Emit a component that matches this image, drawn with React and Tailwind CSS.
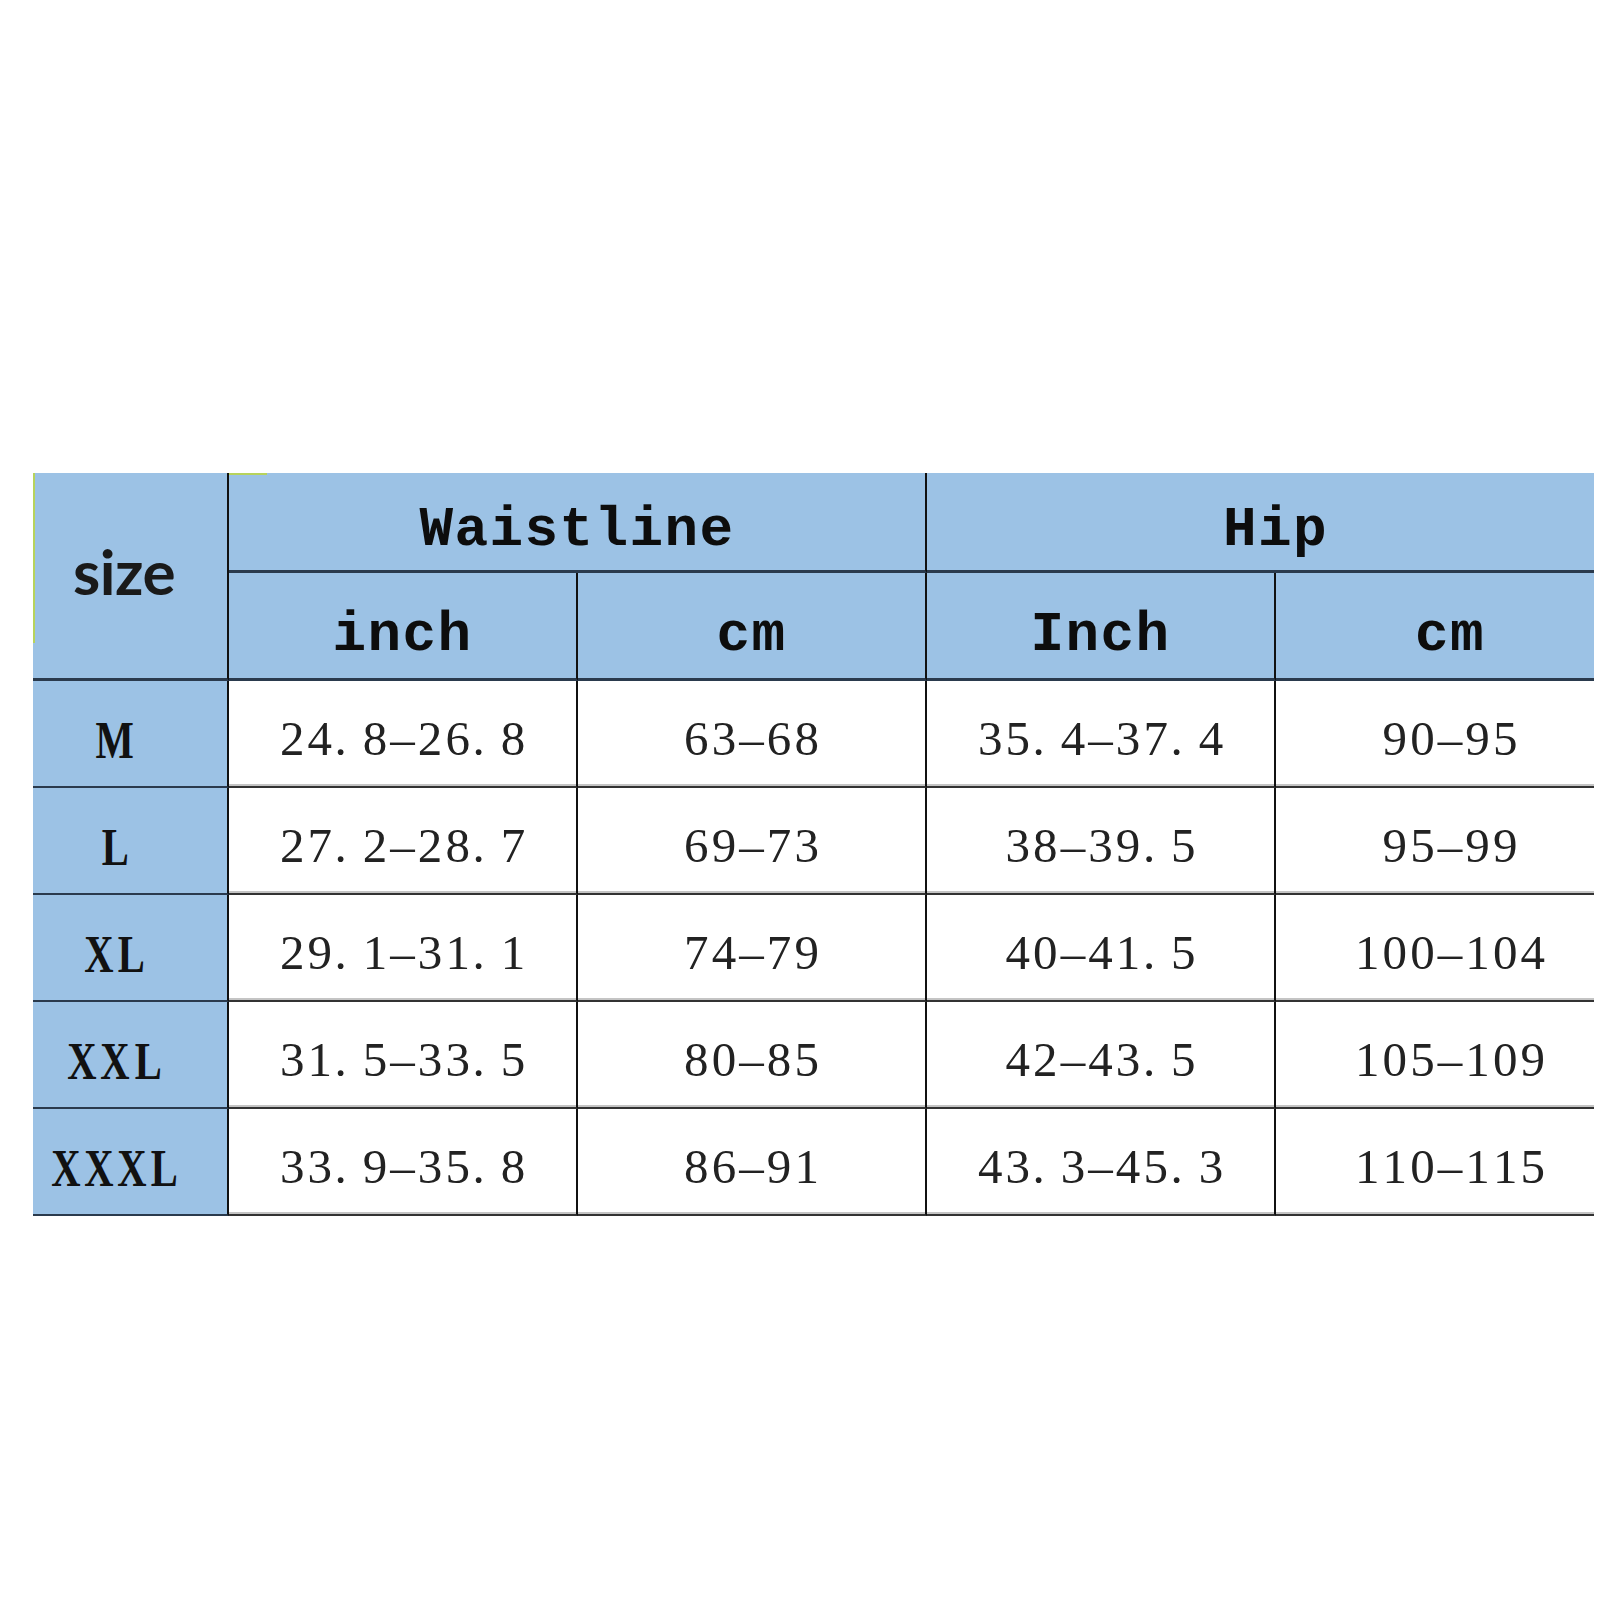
import React from "react";

const rows = [
  ["M", "24.8–26.8", "63–68", "35.4–37.4", "90–95"],
  ["L", "27.2–28.7", "69–73", "38–39.5", "95–99"],
  ["XL", "29.1–31.1", "74–79", "40–41.5", "100–104"],
  ["XXL", "31.5–33.5", "80–85", "42–43.5", "105–109"],
  ["XXXL", "33.9–35.8", "86–91", "43.3–45.3", "110–115"],
];

function Digits({ text }) {
  return (
    <span className="inline-flex font-['Liberation_Serif',serif] text-[49px] leading-none text-[#222]">
      {text.split("").map((c, i) => (
        <span
          key={i}
          className={c === "." ? "inline-block w-[27.6px] text-left pl-[1px]" : "inline-block w-[27.6px] text-center"}
        >
          {c}
        </span>
      ))}
    </span>
  );
}

function SizeLabel({ text }) {
  return (
    <span className="inline-flex font-['Liberation_Serif',serif] font-bold text-[52px] leading-none text-[#111]">
      {text.split("").map((c, i) => (
        <span key={i} className="inline-flex w-[33px] justify-center">
          <span className="inline-block scale-x-[0.78]">{c}</span>
        </span>
      ))}
    </span>
  );
}

function Head({ text }) {
  return (
    <span className="font-['Liberation_Mono',monospace] font-bold text-[56px] leading-none tracking-[1.4px] text-[#0d0d0d]">
      {text}
    </span>
  );
}

const blue = "bg-[#9cc2e5]";

export default function App() {
  return (
    <div className="w-[1623px] h-[1623px] bg-white pt-[473px] pl-[33px]">
      <div className="grid grid-cols-[196px_349px_349px_349px_318px] grid-rows-[100px_108px_107px_107px_107px_107px_107px]">
        {/* size header */}
        <div className={`${blue} relative row-span-2 border-r-2 border-b-[3px] border-r-[#111] border-b-[#2a3a4d] flex items-center justify-center pr-[12px] pb-[9px]`}>
          <span className="absolute left-0 top-0 w-[2px] h-[170px] bg-[#b7d35c]" />
          <span className="font-['Lato',sans-serif] font-bold text-[62px] leading-none tracking-[-0.5px] text-[#1a1a1a]">size</span>
        </div>
        <div className={`${blue} relative col-span-2 border-r-2 border-b-[3px] border-r-[#111] border-b-[#2a3a4d] flex items-center justify-center pt-[17px]`}>
          <span className="absolute left-0 top-0 w-[38px] h-[2px] bg-[#b7d35c]" />
          <Head text="Waistline" />
        </div>
        <div className={`${blue} col-span-2 border-b-[3px] border-b-[#2a3a4d] flex items-center justify-center pt-[17px] pl-[30px]`}>
          <Head text="Hip" />
        </div>
        {/* sub header */}
        <div className={`${blue} border-r-2 border-b-[3px] border-r-[#111] border-b-[#2a3a4d] flex items-center justify-center pt-[19px]`}>
          <Head text="inch" />
        </div>
        <div className={`${blue} border-r-2 border-b-[3px] border-r-[#111] border-b-[#2a3a4d] flex items-center justify-center pt-[19px]`}>
          <Head text="cm" />
        </div>
        <div className={`${blue} border-r-2 border-b-[3px] border-r-[#111] border-b-[#2a3a4d] flex items-center justify-center pt-[19px]`}>
          <Head text="Inch" />
        </div>
        <div className={`${blue} border-b-[3px] border-b-[#2a3a4d] flex items-center justify-center pt-[19px] pl-[30px]`}>
          <Head text="cm" />
        </div>
        {rows.map((r) => (
          <React.Fragment key={r[0]}>
            <div className={`${blue} border-r-2 border-b-2 border-r-[#111] border-b-[#2a3a4d] flex items-center justify-center pr-[30px] pt-[14px]`}>
              <SizeLabel text={r[0]} />
            </div>
            <div className="bg-white border-r-2 border-b-2 border-r-[#111] border-b-[#333] shadow-[inset_0_-2px_0_#c4c4c4] flex items-center justify-center pt-[10px]">
              <Digits text={r[1]} />
            </div>
            <div className="bg-white border-r-2 border-b-2 border-r-[#111] border-b-[#333] shadow-[inset_0_-2px_0_#c4c4c4] flex items-center justify-center pt-[10px]">
              <Digits text={r[2]} />
            </div>
            <div className="bg-white border-r-2 border-b-2 border-r-[#111] border-b-[#333] shadow-[inset_0_-2px_0_#c4c4c4] flex items-center justify-center pt-[10px]">
              <Digits text={r[3]} />
            </div>
            <div className="bg-white border-b-2 border-b-[#333] shadow-[inset_0_-2px_0_#c4c4c4] flex items-center justify-center pt-[10px] pl-[30px]">
              <Digits text={r[4]} />
            </div>
          </React.Fragment>
        ))}
      </div>
    </div>
  );
}
